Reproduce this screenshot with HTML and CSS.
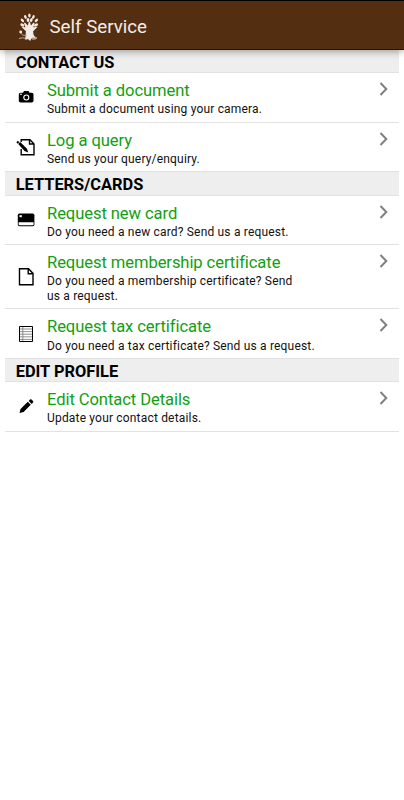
FILE: index.html
```
<!DOCTYPE html>
<html lang="en">
<head>
<meta charset="utf-8">
<title>Self Service</title>
<link rel="stylesheet" href="styles.css">
</head>
<body>
<header class="bar">
  <svg class="logo" viewBox="0 0 22 28" width="22" height="28">
    <g fill="#f3ece7">
      <ellipse cx="11.4" cy="2.6" rx="1.2" ry="2"/>
      <ellipse cx="7.4" cy="4" rx="1.2" ry="2" transform="rotate(-25 7.4 4)"/>
      <ellipse cx="15.4" cy="4" rx="1.2" ry="2" transform="rotate(25 15.4 4)"/>
      <ellipse cx="10" cy="7" rx="1.4" ry="2.1"/>
      <ellipse cx="13.3" cy="7" rx="1.3" ry="2.1" transform="rotate(20 13.3 7)"/>
      <ellipse cx="4.4" cy="7.4" rx="1.2" ry="2.1" transform="rotate(-45 4.4 7.4)"/>
      <ellipse cx="18.4" cy="7.4" rx="1.2" ry="2.1" transform="rotate(45 18.4 7.4)"/>
      <ellipse cx="4.4" cy="12" rx="1.4" ry="2.2" transform="rotate(-65 4.4 12)"/>
      <ellipse cx="18" cy="12" rx="1.4" ry="2.2" transform="rotate(65 18 12)"/>
      <path d="M7.800 26 L8.600 18 L5 14.500 L8.500 15 L6.500 10 L10.200 14 L11.400 9 L12.600 14 L16 10 L14.500 15 L18 14.500 L14.500 18 L15 22 L17 25 L13 25 L12 27 L10.500 25.500 Z" stroke="#f3ece7" stroke-width="1.200"/>
      <circle cx="2.700" cy="19" r="1.400"/>
    </g>
    <path d="M3 20c1 3 4 2 6 3M1 25.500q4-1.500 7 0M14 25q3-2 5 0q-2 2-5 1" fill="none" stroke="#c9b5a5" stroke-width=".9"/>
  </svg>
  <h1>Self Service</h1>
</header>
<main class="list">
  <h2>CONTACT US</h2>
  <a class="row">
    <svg class="icon" viewBox="0 0 20 20"><path d="M4.600 5.700H7l1-1.700h4.500l1 1.700h2.200q1.800 0 1.800 1.800v6.200q0 1.800-1.800 1.800H4.600q-1.800 0-1.800-1.800V7.500q0-1.800 1.800-1.800z"/><circle cx="10.300" cy="10.500" r="2.500" fill="none" stroke="#fff" stroke-width="1.100"/><path d="M4 6.800h2v1H4z" fill="#fff"/></svg>
    <div class="text"><h3>Submit a document</h3><p>Submit a document using your camera.</p></div>
    <svg class="chev" viewBox="0 0 10 14"><path d="M1.500 1L7.300 7 1.500 13"/></svg>
  </a>
  <a class="row">
    <svg class="icon" viewBox="0 0 20 20"><path d="M5.200 5V2.700H14l4 4.300v10.700H5.200V12M13.500 2.700V7H18" fill="none" stroke="#000" stroke-width="1.400"/><path d="M2.200 7l2-1.900 6.800 6.700 1.200 3.600-3.700-1.300zM.4 5.300l1.500-1.500 1.400 1.400-1.700 1.600z"/></svg>
    <div class="text"><h3>Log a query</h3><p>Send us your query/enquiry.</p></div>
    <svg class="chev" viewBox="0 0 10 14"><path d="M1.500 1L7.300 7 1.500 13"/></svg>
  </a>
  <h2>LETTERS/CARDS</h2>
  <a class="row">
    <svg class="icon" viewBox="0 0 20 20"><rect x="1.800" y="3.600" width="16.600" height="12.600" rx="1.600"/><path d="M2.600 12.200h15v2q0 1-1 1H3.600q-1 0-1-1z" fill="#fff"/><path d="M3.500 5.200h2.300v2H3.500z" fill="#fff"/></svg>
    <div class="text"><h3>Request new card</h3><p>Do you need a new card? Send us a request.</p></div>
    <svg class="chev" viewBox="0 0 10 14"><path d="M1.500 1L7.300 7 1.500 13"/></svg>
  </a>
  <a class="row tall">
    <svg class="icon" viewBox="0 0 20 20"><path d="M3.500 1.700h9L17 6.400v11.300H3.500zM12.200 1.700v5H17" fill="none" stroke="#000" stroke-width="1.400"/></svg>
    <div class="text"><h3>Request membership certificate</h3><p>Do you need a membership certificate? Send<br>us a request.</p></div>
    <svg class="chev" viewBox="0 0 10 14"><path d="M1.500 1L7.300 7 1.500 13"/></svg>
  </a>
  <a class="row">
    <svg class="icon" viewBox="0 0 20 20"><path d="M3.500 5h13M3.500 7.600h13M3.500 10.200h13M3.500 12.800h13M3.500 15.400h13M6.800 2.500v15" stroke="#777" stroke-width=".8"/><path d="M3.500 2.500h13v15h-13z" fill="none" stroke="#000"/></svg>
    <div class="text"><h3>Request tax certificate</h3><p>Do you need a tax certificate? Send us a request.</p></div>
    <svg class="chev" viewBox="0 0 10 14"><path d="M1.500 1L7.300 7 1.500 13"/></svg>
  </a>
  <h2>EDIT PROFILE</h2>
  <a class="row">
    <svg class="icon" viewBox="0 0 20 20"><path d="M3.500 16l1-4 7.300-7.200 3 3L7.600 15zM12.700 3.900l1.300-1.300q.8-.7 1.600 0l1.400 1.400q.7.800 0 1.600l-1.300 1.300z"/></svg>
    <div class="text"><h3>Edit Contact Details</h3><p>Update your contact details.</p></div>
    <svg class="chev" viewBox="0 0 10 14"><path d="M1.500 1L7.300 7 1.500 13"/></svg>
  </a>
</main>
</body>
</html>
```
FILE: styles.css
```
* { box-sizing: border-box; }
body { margin: 0; background: #fff; font-family: Roboto, "Liberation Sans", sans-serif; color: #000; }
h1, h2, h3, p { margin: 0; font-weight: 400; }
.bar {
  position: relative;
  display: flex;
  align-items: center;
  height: 50px;
  padding: 3px 0 0 18px;
  background: #532e10;
  border-top: 1px solid #000;
  border-bottom: 1px solid #3c0b00;
  box-shadow: 0 1px 8px rgba(0, 0, 0, .4);
}
.logo { margin-right: 9.500px; }
.bar h1 { font-size: 18.700px; line-height: 24px; color: #f3ece7; letter-spacing: 0; }
.list { padding: 0 5px; }
.list h2 {
  height: 23.200px;
  padding-left: 10.700px;
  background: #eee;
  border-bottom: 1px solid #e2e2e2;
  font-size: 16.400px;
  font-weight: 700;
  line-height: 25px;
}
.row {
  display: flex;
  height: 49.600px;
  border-bottom: 1px solid #e2e2e2;
}
.row.tall { height: 64.300px; }
.icon { width: 20px; height: 20px; margin: 0 11px 0 11px; align-self: center; }
.text { flex: 1; padding-top: 7px; }
.text h3 { font-size: 16.600px; line-height: 21px; color: #11a011; letter-spacing: -.09px; }
.text p { font-size: 12px; line-height: 14.700px; letter-spacing: .18px; padding-top: 1.200px; color: #111; }
.chev { width: 10px; height: 14px; margin: 9px 10.500px 0 0; fill: none; stroke: #808080; stroke-width: 2; }
```
